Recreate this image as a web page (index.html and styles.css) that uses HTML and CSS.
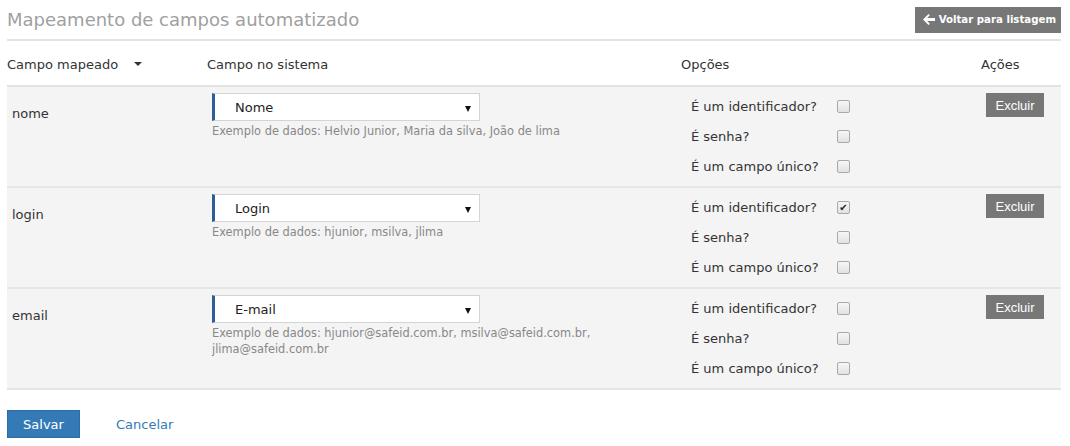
FILE: index.html
```html
<!DOCTYPE html>
<html>
<head>
  <link rel="stylesheet" href="styles.css">
</head>
<body>

  <div class="container">
    <div class="page-header">
      <h2>Mapeamento de campos automatizado</h2>
      <button class="btn-back">
        <svg width="12" height="11" viewBox="0 0 12 11"><path d="M0 5.5 L5.5 0 L6.8 1.3 L4.2 3.9 H12 V7.1 H4.2 L6.8 9.7 L5.5 11 Z" fill="#fff"/></svg>
        Voltar para listagem
      </button>
    </div>

    <div class="grid-head">
      <div class="col-field">Campo mapeado <span class="sort-caret"></span></div>
      <div class="col-system">Campo no sistema</div>
      <div class="col-options">Opções</div>
      <div class="col-actions">Ações</div>
    </div>

    <div class="grid-row">
      <div class="col-field"><span class="field-name">nome</span></div>
      <div class="col-system">
        <div class="select">Nome<span class="select-caret"></span></div>
        <div class="example">Exemplo de dados: Helvio Junior, Maria da silva, João de lima</div>
      </div>
      <div class="col-options">
        <div class="option"><span>É um identificador?</span><span class="check"></span></div>
        <div class="option"><span>É senha?</span><span class="check"></span></div>
        <div class="option"><span>É um campo único?</span><span class="check"></span></div>
      </div>
      <div class="col-actions"><button class="btn-delete">Excluir</button></div>
    </div>

    <div class="grid-row">
      <div class="col-field"><span class="field-name">login</span></div>
      <div class="col-system">
        <div class="select">Login<span class="select-caret"></span></div>
        <div class="example">Exemplo de dados: hjunior, msilva, jlima</div>
      </div>
      <div class="col-options">
        <div class="option"><span>É um identificador?</span><span class="check checked">&#10004;</span></div>
        <div class="option"><span>É senha?</span><span class="check"></span></div>
        <div class="option"><span>É um campo único?</span><span class="check"></span></div>
      </div>
      <div class="col-actions"><button class="btn-delete">Excluir</button></div>
    </div>

    <div class="grid-row">
      <div class="col-field"><span class="field-name">email</span></div>
      <div class="col-system">
        <div class="select">E-mail<span class="select-caret"></span></div>
        <div class="example">Exemplo de dados: hjunior@safeid.com.br, msilva@safeid.com.br, jlima@safeid.com.br</div>
      </div>
      <div class="col-options">
        <div class="option"><span>É um identificador?</span><span class="check"></span></div>
        <div class="option"><span>É senha?</span><span class="check"></span></div>
        <div class="option"><span>É um campo único?</span><span class="check"></span></div>
      </div>
      <div class="col-actions"><button class="btn-delete">Excluir</button></div>
    </div>

    <div class="form-actions">
      <button class="btn-save">Salvar</button>
      <a class="link-cancel" href="#">Cancelar</a>
    </div>
  </div>

</body>
</html>
```

FILE: styles.css
```css
body {
  margin: 0;
  font-family: "DejaVu Sans", Verdana, sans-serif;
  font-size: 13px;
  color: #333;
  background: #fff;
}

.container {
  width: 1054px;
  margin-left: 7px;
}

.page-header {
  display: flex;
  justify-content: space-between;
  align-items: center;
  height: 41px;
  border-bottom: 2px solid #e3e3e3;
  box-sizing: border-box;
}

.page-header h2 {
  margin: 0;
  font-size: 18px;
  font-weight: normal;
  color: #a0a0a0;
}

.btn-back {
  display: flex;
  align-items: center;
  gap: 4px;
  height: 26px;
  padding: 0 5px 0 8px;
  background: #777;
  border: none;
  color: #fff;
  font-family: "DejaVu Sans", Verdana, sans-serif;
  font-size: 10.2px;
  font-weight: bold;
}

.grid-head,
.grid-row {
  display: grid;
  grid-template-columns: 200px 474px 300px 80px;
}

.grid-head {
  height: 46px;
  align-items: center;
  border-bottom: 2px solid #e3e3e3;
  box-sizing: border-box;
  padding-top: 2px;
}

.sort-caret {
  display: inline-block;
  width: 0;
  height: 0;
  margin-left: 12px;
  vertical-align: 3px;
  border-left: 4px solid transparent;
  border-right: 4px solid transparent;
  border-top: 4px solid #333;
}

.grid-row {
  background: #f4f4f4;
  border-bottom: 2px solid #e6e6e6;
  padding: 6px 0 5px;
}

.grid-row .col-field,
.grid-row .col-system,
.grid-row .col-actions {
  padding-left: 5px;
}

.grid-row .col-options {
  padding-left: 10px;
  margin-top: -2px;
}

.field-name {
  display: block;
  margin-top: 13px;
}

.select {
  position: relative;
  height: 28px;
  line-height: 27px;
  padding-left: 20px;
  box-sizing: border-box;
  width: 268px;
  background: #fff;
  border: 1px solid #d4d4d4;
  border-left: 3px solid #2d5f96;
  color: #222;
}

.select-caret {
  position: absolute;
  right: 8px;
  top: 12px;
  width: 0;
  height: 0;
  border-left: 3px solid transparent;
  border-right: 3px solid transparent;
  border-top: 6px solid #111;
}

.example {
  margin-top: 2px;
  font-size: 11.4px;
  line-height: 16px;
  color: #888;
  width: 400px;
}

.option {
  display: flex;
  align-items: center;
  height: 30px;
}

.option span:first-child {
  width: 146px;
}

.check {
  display: inline-block;
  width: 11px;
  height: 11px;
  border: 1px solid #a9a9a9;
  border-radius: 2px;
  background: linear-gradient(#f6f6f6, #e2e2e2);
  font-size: 10px;
  line-height: 11px;
  text-align: center;
  color: #222;
}

.btn-delete {
  height: 24px;
  width: 58px;
  background: #777;
  border: none;
  color: #fff;
  font-family: "Liberation Sans", Arial, sans-serif;
  font-size: 13px;
  padding: 0;
}

.form-actions {
  display: flex;
  align-items: center;
  gap: 36px;
  margin-top: 20px;
}

.btn-save {
  height: 28px;
  width: 73px;
  background: #337ab7;
  border: 1px solid #2e6da4;
  color: #fff;
  font-family: "DejaVu Sans", Verdana, sans-serif;
  font-size: 13px;
}

.link-cancel {
  color: #337ab7;
  text-decoration: none;
}
```
